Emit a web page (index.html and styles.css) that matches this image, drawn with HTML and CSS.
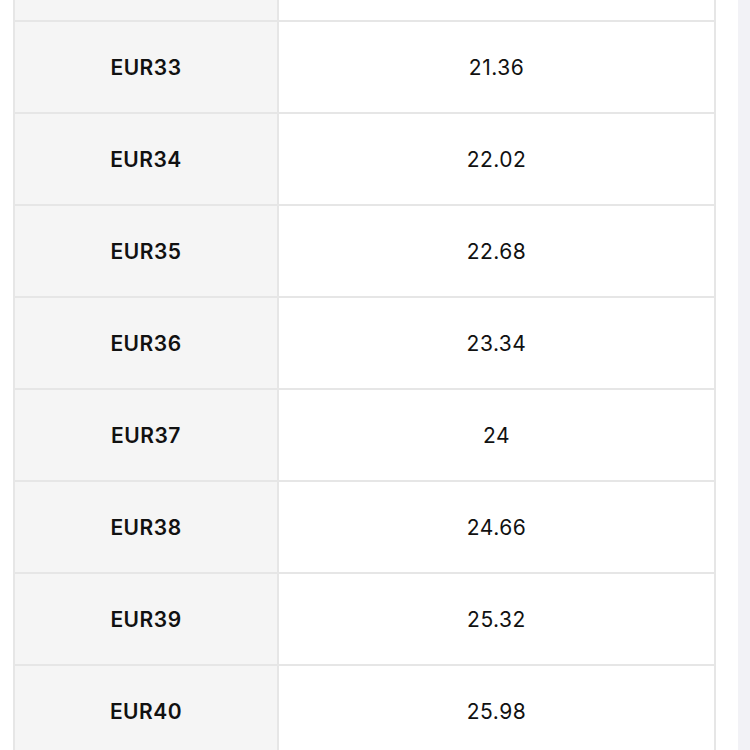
FILE: index.html
```html
<!DOCTYPE html>
<html lang="en">
<head>
<meta charset="utf-8">
<title>Size chart</title>
<link rel="stylesheet" href="styles.css">
</head>
<body>
<div class="page">
  <div class="table">
    <div class="row row-top"><div class="cell key"></div><div class="cell val"></div></div>
    <div class="row"><div class="cell key">EUR33</div><div class="cell val">21.36</div></div>
    <div class="row"><div class="cell key">EUR34</div><div class="cell val">22.02</div></div>
    <div class="row"><div class="cell key">EUR35</div><div class="cell val">22.68</div></div>
    <div class="row"><div class="cell key">EUR36</div><div class="cell val">23.34</div></div>
    <div class="row"><div class="cell key">EUR37</div><div class="cell val">24</div></div>
    <div class="row"><div class="cell key">EUR38</div><div class="cell val">24.66</div></div>
    <div class="row"><div class="cell key">EUR39</div><div class="cell val">25.32</div></div>
    <div class="row"><div class="cell key">EUR40</div><div class="cell val">25.98</div></div>
  </div>
  <div class="strip"></div>
</div>
</body>
</html>
```
FILE: styles.css
```css
html, body {
  margin: 0;
  padding: 0;
  background: #ffffff;
}
body {
  font-family: Inter, "Liberation Sans", sans-serif;
  color: #111111;
  overflow: hidden;
}
.page {
  display: flex;
  height: 750px;
  padding-left: 13px;
  gap: 22px;
}
.table {
  width: 699px;
  border-left: 2px solid #e6e6e6;
  border-right: 2px solid #e6e6e6;
  flex: none;
}
.row {
  display: flex;
  height: 90px;
  border-bottom: 2px solid #e6e6e6;
}
.row-top {
  height: 20px;
}
.cell {
  display: flex;
  align-items: center;
  justify-content: center;
  font-size: 21px;
  letter-spacing: 0.5px;
  padding-top: 1px;
}
.key {
  width: 262px;
  background: #f5f5f5;
  border-right: 2px solid #e6e6e6;
  font-weight: 600;
}
.val {
  flex: 1;
  font-weight: 400;
}
.strip {
  flex: 1;
  background: #f2f2f6;
}
```
